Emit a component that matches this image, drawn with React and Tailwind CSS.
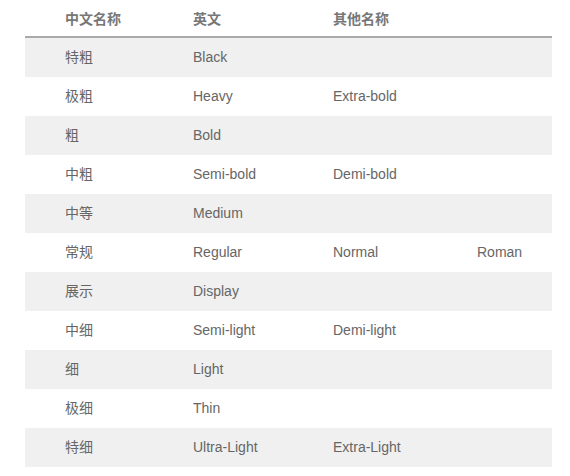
const rows = [
  ["特粗", "Black", "", ""],
  ["极粗", "Heavy", "Extra-bold", ""],
  ["粗", "Bold", "", ""],
  ["中粗", "Semi-bold", "Demi-bold", ""],
  ["中等", "Medium", "", ""],
  ["常规", "Regular", "Normal", "Roman"],
  ["展示", "Display", "", ""],
  ["中细", "Semi-light", "Demi-light", ""],
  ["细", "Light", "", ""],
  ["极细", "Thin", "", ""],
  ["特细", "Ultra-Light", "Extra-Light", ""],
]

const cols = "grid grid-cols-[128px_140px_144px_115px]"

export default function App() {
  return (
    <div className="min-h-screen bg-white pl-[25px] pt-[2px] font-['Liberation_Sans','Noto_Sans_CJK_SC',sans-serif] text-[14px] text-[#666]">
      <div className="w-[527px]">
        <div className={`${cols} h-[36px] items-center border-b-2 border-[#aaa] font-bold text-[#777]`}>
          <div className="pl-10">中文名称</div>
          <div className="pl-10">英文</div>
          <div className="pl-10">其他名称</div>
          <div className="pl-10"></div>
        </div>
        {rows.map((r, i) => (
          <div key={i} className={`${cols} h-[39px] items-center ${i % 2 === 0 ? "bg-[#f0f0f0]" : "bg-white"}`}>
            {r.map((c, j) => (
              <div key={j} className="pl-10">{c}</div>
            ))}
          </div>
        ))}
      </div>
    </div>
  )
}
